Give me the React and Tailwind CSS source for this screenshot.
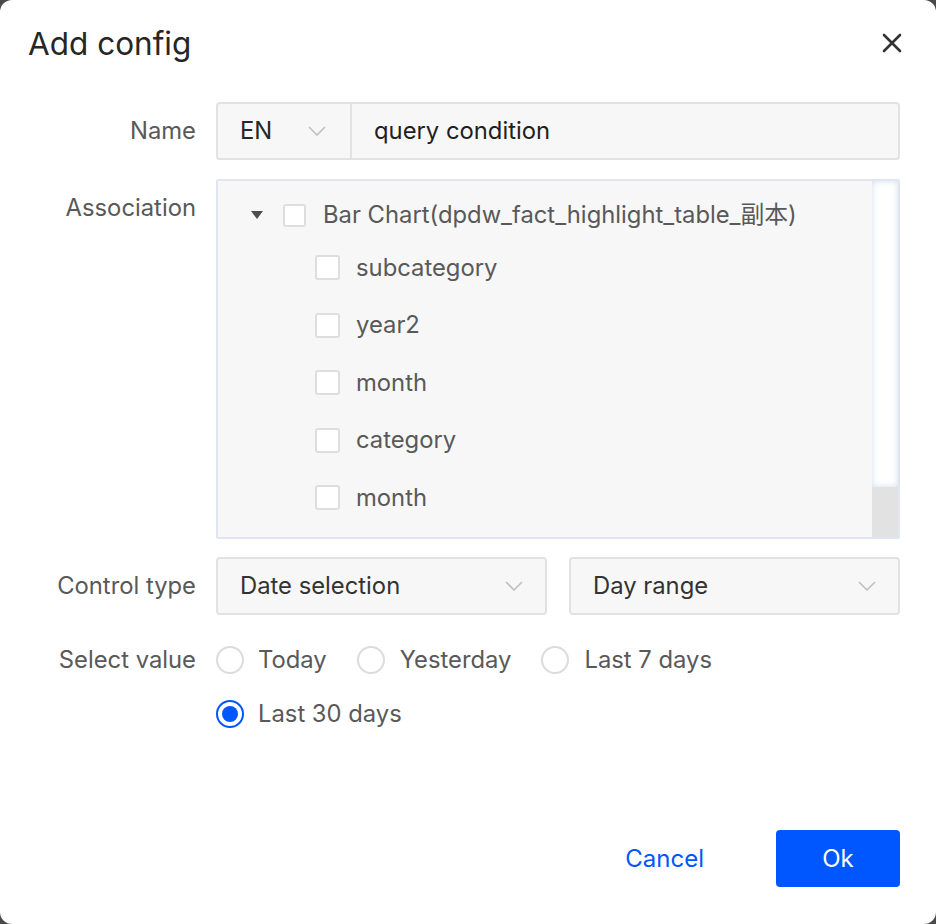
import React from "react";

const font = { fontFamily: "Inter, 'Noto Sans CJK SC', sans-serif" };

function Chevron() {
  return (
    <svg width="18" height="10" viewBox="0 0 18 10" fill="none">
      <path d="M1 1 L9 9 L17 1" stroke="#bfbfbf" strokeWidth="1.6" />
    </svg>
  );
}

function Checkbox() {
  return <span className="block w-[23px] h-[23px] bg-white border-2 border-[#dedede] rounded-[3px] shrink-0" />;
}

function Radio({ checked }) {
  return checked ? (
    <span className="flex items-center justify-center w-[28px] h-[28px] rounded-full border-2 border-[#0057ff] bg-white shrink-0">
      <span className="block w-[16px] h-[16px] rounded-full bg-[#0057ff]" />
    </span>
  ) : (
    <span className="block w-[28px] h-[28px] rounded-full border-2 border-[#dcdcdc] bg-white shrink-0" />
  );
}

function Label({ children }) {
  return (
    <div className="w-[168px] shrink-0 h-[58px] flex items-center justify-end text-[23.8px] text-[#595959] whitespace-nowrap">
      {children}
    </div>
  );
}

export default function App() {
  const children = ["subcategory", "year2", "month", "category", "month"];
  return (
    <div className="w-[936px] h-[924px] bg-[#4a4a4a]" style={font}>
      <div className="w-[936px] h-[924px] bg-white rounded-[12px] flex flex-col">
        <div className="h-[90px] flex items-center justify-between pl-[28px] pr-[34px]">
          <div className="text-[31.5px] text-[#262626] leading-none mt-[-2px]">Add config</div>
          <svg width="20" height="20" viewBox="0 0 20 20" className="mt-[-4px]">
            <path d="M2 2 L18 18 M18 2 L2 18" stroke="#333" strokeWidth="2.6" strokeLinecap="round" />
          </svg>
        </div>

        <div className="flex flex-col pl-[28px] pr-[36px] mt-[12px]">
          {/* Name */}
          <div className="flex gap-[20px]">
            <Label>Name</Label>
            <div className="flex flex-1 h-[58px]">
              <div className="w-[136px] flex items-center justify-between pl-[22px] pr-[24px] bg-[#f7f7f7] border-2 border-[#e2e2e2] rounded-l-[4px] text-[23.8px] text-[#262626]">
                <span>EN</span>
                <Chevron />
              </div>
              <div className="flex-1 flex items-center pl-[22px] bg-[#f7f7f7] border-2 border-l-0 border-[#e2e2e2] rounded-r-[4px] text-[23.8px] text-[#1f1f1f]">
                query condition
              </div>
            </div>
          </div>

          {/* Association */}
          <div className="flex gap-[20px] mt-[19px]">
            <Label>Association</Label>
            <div className="flex-1 h-[360px] border-2 border-[#dfe6f0] rounded-[2px] bg-[#f7f7f7] flex overflow-hidden">
              <div className="flex-1 pt-[10px]">
                <div className="h-[48px] flex items-center pl-[33px]">
                  <svg width="12" height="9" viewBox="0 0 12 9">
                    <path d="M0 0 L12 0 L6 8 Z" fill="#4d4d4d" />
                  </svg>
                  <span className="ml-[20px]"><Checkbox /></span>
                  <span className="ml-[17px] text-[23.8px] text-[#595959] whitespace-nowrap">
                    Bar Chart(dpdw_fact_highlight_table_副本)
                  </span>
                </div>
                {children.map((c, i) => (
                  <div key={i} className="h-[57.5px] flex items-center pl-[97px]">
                    <span className="w-[25px] h-[25px] bg-white border-2 border-[#dedede] rounded-[3px] shrink-0 block" />
                    <span className="ml-[16px] text-[23.8px] text-[#595959]">{c}</span>
                  </div>
                ))}
              </div>
              <div className="w-[26px] bg-[#e2e2e2] flex flex-col">
                <div className="h-[306px] bg-white shadow-[inset_0_0_6px_rgba(190,205,230,0.7)]" />
              </div>
            </div>
          </div>

          {/* Control type */}
          <div className="flex gap-[20px] mt-[18px]">
            <Label>Control type</Label>
            <div className="flex flex-1 gap-[22px]">
              <div className="flex-1 h-[58px] flex items-center justify-between pl-[22px] pr-[22px] bg-[#f7f7f7] border-2 border-[#e2e2e2] rounded-[4px] text-[23.8px] text-[#333]">
                <span>Date selection</span>
                <Chevron />
              </div>
              <div className="flex-1 h-[58px] flex items-center justify-between pl-[22px] pr-[22px] bg-[#f7f7f7] border-2 border-[#e2e2e2] rounded-[4px] text-[23.8px] text-[#333]">
                <span>Day range</span>
                <Chevron />
              </div>
            </div>
          </div>

          {/* Select value */}
          <div className="flex gap-[20px] mt-[18px]">
            <div className="w-[168px] shrink-0 h-[54px] flex items-center justify-end text-[23.8px] text-[#595959] whitespace-nowrap">
              Select value
            </div>
            <div className="flex-1 flex flex-col">
              <div className="h-[54px] flex items-center text-[23.8px] text-[#595959]">
                <Radio />
                <span className="ml-[14px]">Today</span>
                <span className="ml-[30px]"><Radio /></span>
                <span className="ml-[15px]">Yesterday</span>
                <span className="ml-[30px]"><Radio /></span>
                <span className="ml-[15px]">Last 7 days</span>
              </div>
              <div className="h-[54px] flex items-center text-[23.8px] text-[#595959]">
                <Radio checked />
                <span className="ml-[14px]">Last 30 days</span>
              </div>
            </div>
          </div>
        </div>

        <div className="flex-1" />
        <div className="flex items-center justify-end pr-[36px] pb-[37px]">
          <span className="text-[24px] text-[#0057ff] mr-[72px]">Cancel</span>
          <div className="w-[124px] h-[57px] rounded-[4px] bg-[#0057ff] flex items-center justify-center text-[24px] text-white">
            Ok
          </div>
        </div>
      </div>
    </div>
  );
}
